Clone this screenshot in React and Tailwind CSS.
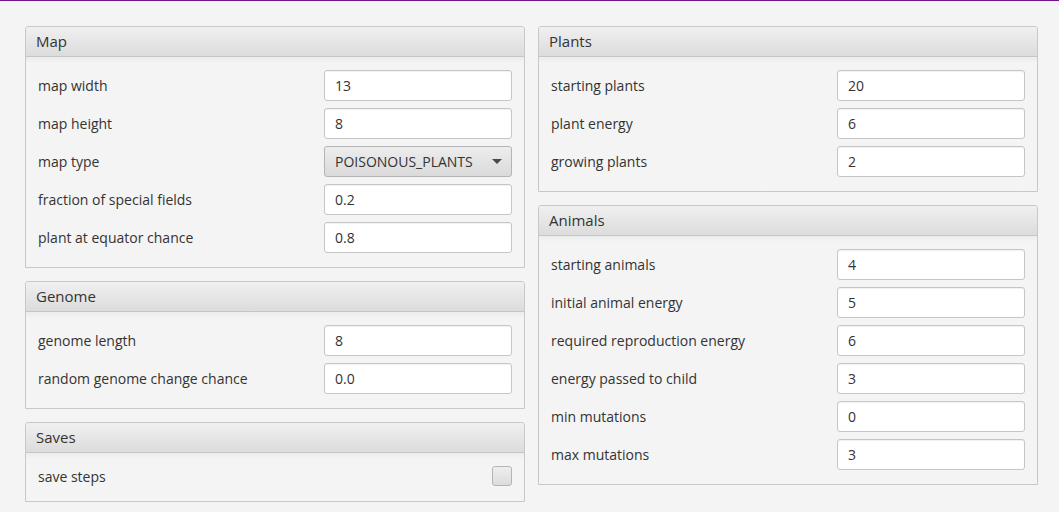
import React from "react";

function Panel({ title, children, bodyClass = "pt-[13px] pb-[14px]" }) {
  return (
    <div className="border border-[#c8c8c8] rounded-t-[3px] bg-[#f4f4f4]">
      <div className="h-[30px] border-b border-[#c5c5c5] rounded-t-[2px] bg-gradient-to-b from-[#f0f0f0] to-[#dcdcdc] pl-[10px] flex items-center text-[15px] text-[#333333]">
        {title}
      </div>
      <div className={`px-[12px] flex flex-col gap-[7px] bg-gradient-to-b from-[#ececec] via-[#f4f4f4] via-[6px] to-[#f4f4f4] ${bodyClass}`}>
        {children}
      </div>
    </div>
  );
}

function Field({ label, value }) {
  return (
    <div className="flex items-center justify-between h-[31px]">
      <span className="text-[#333333]">{label}</span>
      <div className="w-[188px] h-[31px] bg-white border border-[#c6c6c6] rounded-[3px] shadow-[inset_0_1px_1px_rgba(0,0,0,0.06)] flex items-center pl-[10px] text-[#333333]">
        {value}
      </div>
    </div>
  );
}

function Combo({ label, value }) {
  return (
    <div className="flex items-center justify-between h-[31px]">
      <span className="text-[#333333]">{label}</span>
      <div className="w-[188px] h-[31px] bg-gradient-to-b from-[#ededed] to-[#dadada] border border-[#b4b4b4] rounded-[3px] flex items-center justify-between pl-[10px] pr-[9px] text-[#333333]">
        <span>{value}</span>
        <svg width="10" height="5" viewBox="0 0 10 5">
          <path d="M0 0 L10 0 L5 5 Z" fill="#4a4a4a" />
        </svg>
      </div>
    </div>
  );
}

export default function App() {
  return (
    <div
      className="min-h-[512px] w-[1059px] bg-[#f4f4f4] border-t border-[#75128a] text-[14px]"
      style={{ fontFamily: '"Open Sans", "Noto Sans", sans-serif' }}
    >
      <div className="flex gap-[13px] pl-[25px] pt-[25px]">
        <div className="flex flex-col gap-[13px] w-[500px]">
          <Panel title="Map">
            <Field label="map width" value="13" />
            <Field label="map height" value="8" />
            <Combo label="map type" value="POISONOUS_PLANTS" />
            <Field label="fraction of special fields" value="0.2" />
            <Field label="plant at equator chance" value="0.8" />
          </Panel>
          <Panel title="Genome">
            <Field label="genome length" value="8" />
            <Field label="random genome change chance" value="0.0" />
          </Panel>
          <Panel title="Saves" bodyClass="pt-[13px] pb-[15px]">
            <div className="flex items-center justify-between h-[20px]">
              <span className="text-[#333333]">save steps</span>
              <div className="w-[20px] h-[20px] rounded-[3px] border border-[#b4b4b4] bg-gradient-to-b from-[#eeeeee] to-[#dcdcdc]" />
            </div>
          </Panel>
        </div>
        <div className="flex flex-col gap-[13px] w-[500px]">
          <Panel title="Plants">
            <Field label="starting plants" value="20" />
            <Field label="plant energy" value="6" />
            <Field label="growing plants" value="2" />
          </Panel>
          <Panel title="Animals">
            <Field label="starting animals" value="4" />
            <Field label="initial animal energy" value="5" />
            <Field label="required reproduction energy" value="6" />
            <Field label="energy passed to child" value="3" />
            <Field label="min mutations" value="0" />
            <Field label="max mutations" value="3" />
          </Panel>
        </div>
      </div>
    </div>
  );
}
